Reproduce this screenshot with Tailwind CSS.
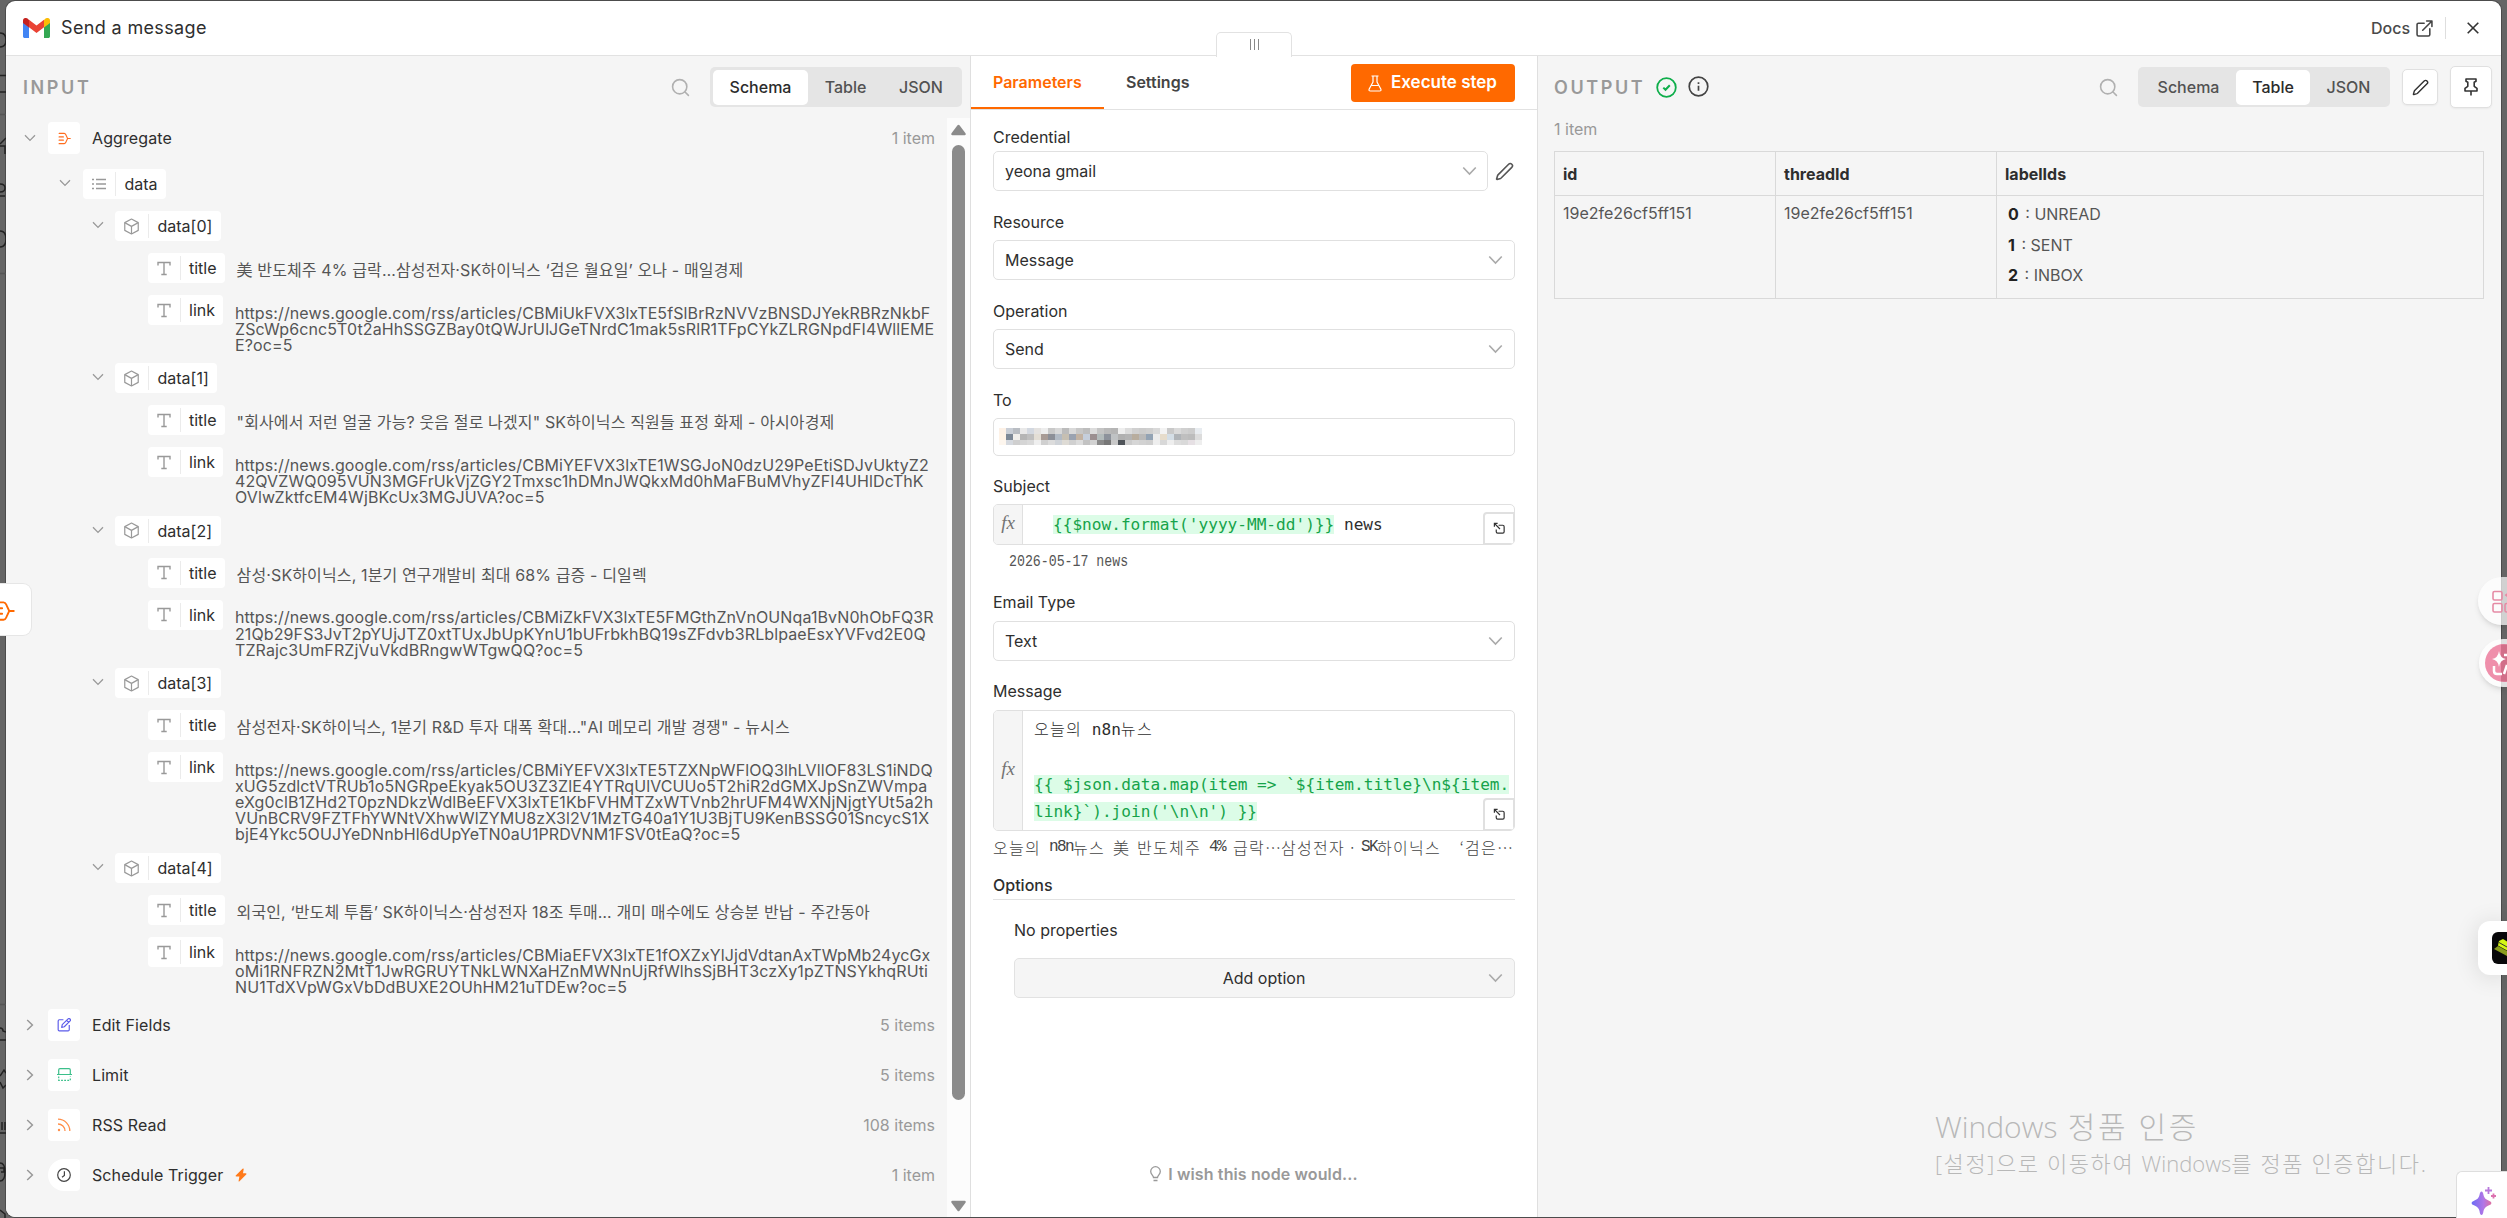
<!DOCTYPE html>
<html lang="ko">
<head>
    <meta charset="utf-8"/>
    <meta content="width=device-width, initial-scale=1.0" name="viewport"/>
    <title>Send a message</title>
    <script src="https://cdn.jsdelivr.net/npm/@tailwindcss/browser@4"></script>
</head>
<body class="bg-[#656565] font-['Inter','Noto_Sans_CJK_KR',sans-serif] text-base text-[#2e2e2e] overflow-hidden">
    <!-- shared icons -->
    <svg class="hidden">
        <symbol id="i-down" viewBox="0 0 12 8"><path d="M1 1.2 6 6.4 11 1.2" fill="none" stroke="currentColor" stroke-width="1.3"/></symbol>
        <symbol id="i-right" viewBox="0 0 8 12"><path d="M1.2 1 6.4 6 1.2 11" fill="none" stroke="currentColor" stroke-width="1.5"/></symbol>
        <symbol id="i-search" viewBox="0 0 24 24"><g fill="none" stroke="currentColor" stroke-width="2" stroke-linecap="round"><circle cx="11" cy="11" r="9"/><path d="m22 22-4.3-4.3"/></g></symbol>
        <symbol id="i-pencil" viewBox="0 0 24 24"><g fill="none" stroke="currentColor" stroke-width="2" stroke-linejoin="round" stroke-linecap="round"><path d="M21.2 6.8a2.8 2.8 0 0 0-4-4L3.8 16.2a2 2 0 0 0-.5.8L2 21.400a.5.5 0 0 0 .6.6L7 20.700a2 2 0 0 0 .8-.5z"/></g></symbol>
        <symbol id="i-cube" viewBox="0 0 24 24"><g fill="none" stroke="currentColor" stroke-width="1.7" stroke-linejoin="round"><path d="M12 1.500 21.500 6.500v11L12 22.500l-9.500-5v-11z"/><path d="M2.500 6.500 12 11.800l9.500-5.300M12 11.800v10.700"/></g></symbol>
        <symbol id="i-text" viewBox="0 0 14 15"><path d="M1 4.500V1.500h12v3M7 1.500v12M4.300 13.500h5.400" fill="none" stroke="currentColor" stroke-width="1.400"/></symbol>
        <symbol id="i-merge" viewBox="0 0 24 24"><g fill="none" stroke="currentColor" stroke-width="2" stroke-linecap="round" stroke-linejoin="round"><path d="M2 2.500h9.500c2 0 2.500 1.500 3.200 3l3 6.500h5M2 21.500h9.500c2 0 2.500-1.500 3.200-3l3-6.500M2 9h8M2 15h8"/></g></symbol>
        <symbol id="i-expand" viewBox="0 0 14 14"><path d="M6 3.500h4.500a1.500 1.500 0 0 1 1.500 1.500v5.500a1.500 1.500 0 0 1-1.500 1.500H5a1.500 1.500 0 0 1-1.500-1.500V8M1.500 5V1.500H5M1.500 1.500l6 6" fill="none" stroke="currentColor" stroke-width="1.300"/></symbol>
    </svg>

    <div class="relative h-[1218px] w-[2507px] pt-px pl-[6px] pb-px pr-[6px]">
        <!-- dimmed canvas seen at the left edge -->
        <svg class="absolute left-0 top-0 w-[6px] h-[1218px]" fill="none" stroke="#222" stroke-width="1.500">
            <path d="M0 3v0M0 33q6 0 6 7t-6 7M0 75.500h6M0 92h6M0 144l6-6M0 146h5v8M0 184q5 0 5 4t-5 4M0 196h5M0 231q6 0 6 8t-6 8M0 1028q3 0 3 3l3 1M0 1040h6M0 1076l4-6 2 3M0 1082l3 6 3-3M2 1122v8M5 1122v8M0 1133h6M0 1163q5 0 5 9t-5 9M0 1168h4v4h-3M0 1210l5 4v4"/>
            <path d="M0 114.500h6M0 273.500h6M0 1004.500h6" stroke="#555"/>
        </svg>

        <div class="flex h-[1216px] w-[2495px] flex-col overflow-hidden rounded-[9px] bg-white ring-1 ring-[#4c4c4c]">
            <header class="flex h-[55px] shrink-0 items-center border-b border-[#e2e2e2] pl-[17px] pr-[22px]">
                <svg class="h-[20px] w-[27px]" viewBox="0 0 27 20">
                    <path d="M0 4v14.200C0 19.200.8 20 1.800 20H6V9z" fill="#4285f4"/>
                    <path d="M21 20h4.200c1 0 1.800-.8 1.800-1.800V4l-6 5z" fill="#34a853"/>
                    <path d="M21 2v7.500l6-4.600V2.500C27 .2 24.300-.8 22.500.6z" fill="#fbbc04"/>
                    <path d="M6 9.300V1.700l7.500 5.700L21 1.700v7.600L13.500 15z" fill="#ea4335"/>
                    <path d="M0 2.500v2.400l6 4.600V2L4.500.6C2.700-.8 0 .2 0 2.500z" fill="#c5221f"/>
                </svg>
                <span class="ml-[11px] text-[18px] leading-6 tracking-[.35px]">Send a message</span>
                <div class="ml-auto flex items-center">
                    <span class="text-base font-medium text-[#4a4a4a]">Docs</span>
                    <svg class="ml-[6px] size-[17px] text-[#444]" viewBox="0 0 24 24" fill="none" stroke="currentColor" stroke-width="2.200" stroke-linecap="round" stroke-linejoin="round"><path d="M15 1.500h7.500V9M9.500 14.500l13-13M19.500 12.500v8a2 2 0 0 1-2 2h-14a2 2 0 0 1-2-2v-14a2 2 0 0 1 2-2h8"/></svg>
                    <span class="ml-[12px] h-[22px] w-px bg-[#dedede]"></span>
                    <svg class="ml-[21px] size-[12px]" viewBox="0 0 12 12" fill="none" stroke="#333" stroke-width="1.600"><path d="m.7.7 10.600 10.600M11.300.7.7 11.300"/></svg>
                </div>
            </header>

            <main class="flex min-h-0 grow">
                <!-- input -->
                <section class="flex w-[965px] shrink-0 flex-col border-r border-[#dfdfdf] bg-[#f5f5f5]">
                    <div class="flex h-[62px] shrink-0 items-center pl-[17px] pr-[8px]">
                        <span class="text-[18px] font-semibold tracking-[2.600px] text-[#999]">INPUT</span>
                        <svg class="ml-auto size-[19px] text-[#b0b0b0]"><use href="#i-search"/></svg>
                        <div class="ml-[20px] flex h-[40px] w-[252px] items-center rounded-[5px] bg-[#e5e5e5] p-[3px] font-medium text-[#525252]">
                            <span class="flex h-[35px] w-[95px] items-center justify-center rounded-[5px] bg-white text-[#2b2b2b]">Schema</span>
                            <span class="w-[75px] text-center">Table</span>
                            <span class="w-[76px] text-center">JSON</span>
                        </div>
                    </div>
                    <div class="flex min-h-0 grow">
                        <div class="w-[941px] pt-[4px] pr-[12px]">
                            <div class="flex h-[32px] items-center pl-[17px]">
                                <svg class="mx-[1px] h-[8px] w-[12px] text-[#999]"><use href="#i-down"/></svg>
                                <span class="ml-[11px] flex size-[32px] items-center justify-center rounded-[4px] bg-white text-[#ff6d1f]"><svg class="size-[13px]"><use href="#i-merge"/></svg></span>
                                <span class="ml-[12px] tracking-[.1px]">Aggregate</span>
                                <span class="ml-auto text-[#999]">1 item</span>
                            </div>
                            <div class="mt-[15px] flex h-[42px] items-start pl-[53px]">
                                <svg class="mt-[10px] h-[8px] w-[12px] text-[#999]"><use href="#i-down"/></svg>
                                <span class="ml-[12px] flex h-[30px] items-center rounded-[4px] bg-white">
                                    <svg class="mx-[9px] h-[12px] w-[14px]" viewBox="0 0 14 12" fill="none" stroke="#999" stroke-width="1.400"><path d="M0 1.500h2M0 6h2M0 10.500h2M4 1.500h10M4 6h10M4 10.500h10"/></svg>
                                    <span class="h-[24px] w-px bg-[#ebebeb]"></span>
                                    <span class="px-[8.500px]">data</span>
                                </span>
                            </div>
                            <div id="tree"></div>
                            <div id="sources" class="mt-[3px]"></div>
                        </div>
                        <div class="flex w-[23px] flex-col items-center bg-[#fcfcfc]">
                            <svg class="mt-[6px] h-[12px] w-[15px]" viewBox="0 0 15 12" fill="#8b8b8b"><path d="M6.500 1.200q1-1 2 0l6 8q.8 2-1 2h-12q-1.800 0-1-2z"/></svg>
                            <div class="mt-[9px] h-[955px] w-[13px] rounded-full bg-[#8b8b8b]"></div>
                            <svg class="mt-[100px] h-[12px] w-[15px]" viewBox="0 0 15 12" fill="#8b8b8b"><path d="M6.500 10.800q1 1 2 0l6-8q.8-2-1-2h-12q-1.800 0-1 2z"/></svg>
                        </div>
                    </div>
                </section>

                <!-- parameters -->
                <section class="relative w-[566px] shrink-0 bg-white">
                    <div class="absolute -top-[24px] left-[245px] flex h-[25px] w-[76px] items-center justify-center gap-[3px] rounded-t-[5px] border border-b-0 border-[#e2e2e2] bg-white pb-[2px]">
                        <i class="h-[11px] w-px bg-[#888]"></i><i class="h-[11px] w-px bg-[#888]"></i><i class="h-[11px] w-px bg-[#888]"></i>
                    </div>
                    <div class="flex h-[54px] items-start border-b border-[#e2e2e2] pr-[22px] font-semibold">
                        <span class="h-[53px] w-[133px] border-b-2 border-[#ff6900] pt-[14px] pl-[22px] leading-6 text-[#ff6900]">Parameters</span>
                        <span class="ml-[22px] pt-[14px] leading-6 text-[#444]">Settings</span>
                        <button class="mt-[8px] ml-auto flex h-[38px] w-[164px] items-center rounded-[4px] bg-[#ff6900] pl-[17px] text-[17px] text-white">
                            <svg class="mr-[9px] h-[17px] w-[14px]" viewBox="0 0 14 17" fill="none" stroke="#fff" stroke-width="1.200" stroke-linejoin="round"><path d="M3.500 1h7M5 1v6L1.200 14q-.8 2 1.300 2h9q2.100 0 1.300-2L9 7V1M3.500 10.500h7"/></svg>
                            Execute step
                        </button>
                    </div>
                    <div class="flex flex-col pr-[22px] pl-[22px] leading-6">
                        <label class="mt-[15px]">Credential</label>
                        <div class="mt-[2px] flex items-center">
                            <div class="flex h-[40px] w-[495px] items-center justify-between rounded-[5px] border border-[#e0e0e0] pl-[11px] pr-[10px]">yeona gmail<svg class="h-[10px] w-[15px] text-[#aaa]"><use href="#i-down"/></svg></div>
                            <svg class="ml-[7px] size-[19px] text-[#555]"><use href="#i-pencil"/></svg>
                        </div>
                        <label class="mt-[19px]">Resource</label>
                        <div class="mt-[6px] flex h-[40px] items-center justify-between rounded-[5px] border border-[#e0e0e0] pl-[11px] pr-[11px]">Message<svg class="h-[10px] w-[15px] text-[#aaa]"><use href="#i-down"/></svg></div>
                        <label class="mt-[19px]">Operation</label>
                        <div class="mt-[6px] flex h-[40px] items-center justify-between rounded-[5px] border border-[#e0e0e0] pl-[11px] pr-[11px]">Send<svg class="h-[10px] w-[15px] text-[#aaa]"><use href="#i-down"/></svg></div>
                        <label class="mt-[19px]">To</label>
                        <div class="mt-[6px] flex h-[38px] items-center rounded-[5px] border border-[#e0e0e0] pl-[5px]">
                            <svg id="mask" class="h-[18px] w-[205px]" shape-rendering="crispEdges"></svg>
                        </div>
                        <label class="mt-[18px]">Subject</label>
                        <div class="relative mt-[6px] flex h-[41px] overflow-hidden rounded-[5px] border border-[#e0e0e0]">
                            <span class="flex w-[29px] items-center justify-center border-r border-[#e0e0e0] bg-[#f5f5f5] pb-[3px] font-['Liberation_Serif',serif] text-[19px] italic text-[#737373]">fx</span>
                            <p class="pt-[9px] pl-[30px] font-['DejaVu_Sans_Mono',monospace] text-[16.130px] leading-[22px] whitespace-pre"><span class="bg-[#dcfce7] text-[#16a34a]">{{$now.format('yyyy-MM-dd')}}</span> news</p>
                            <span class="absolute -right-px -bottom-px flex h-[33px] w-[32px] items-center justify-center rounded-tl-[4px] border-2 border-[#e0e0e0] bg-white"><svg class="size-[13px] text-[#333]"><use href="#i-expand"/></svg></span>
                        </div>
                        <p class="mt-[5px] ml-[16px] h-[23px] origin-left scale-x-[.827] font-['Liberation_Mono',monospace] text-base text-[#555] whitespace-pre">2026-05-17 news</p>
                        <label class="mt-[17px]">Email Type</label>
                        <div class="mt-[7px] flex h-[40px] items-center justify-between rounded-[5px] border border-[#e0e0e0] pl-[11px] pr-[11px]">Text<svg class="h-[10px] w-[15px] text-[#aaa]"><use href="#i-down"/></svg></div>
                        <label class="mt-[18px]">Message</label>
                        <div class="relative mt-[7px] flex h-[121px] overflow-hidden rounded-[5px] border border-[#e0e0e0]">
                            <span class="flex w-[29px] items-center justify-center border-r border-[#e0e0e0] bg-[#f5f5f5] pb-[3px] font-['Liberation_Serif',serif] text-[19px] italic text-[#737373]">fx</span>
                            <div class="pt-[5px] pl-[11px] font-['DejaVu_Sans_Mono','Noto_Sans_CJK_KR',monospace] text-[16.130px] leading-[27px] whitespace-nowrap">
                                <p class="h-[27px]"><span class="font-light tracking-[1.200px]">오늘의</span> n8n<span class="font-light tracking-[1.200px]">뉴스</span></p>
                                <p class="mt-[28px] h-[27px]"><span class="bg-[#dcfce7] text-[#16a34a]">{{ $json.data.map(item =&gt; `${item.title}\n${item.</span></p>
                                <p class="h-[27px]"><span class="bg-[#dcfce7] text-[#16a34a]">link}`).join('\n\n') }}</span></p>
                            </div>
                            <span class="absolute -right-px -bottom-px flex h-[33px] w-[32px] items-center justify-center rounded-tl-[4px] border-2 border-[#e0e0e0] bg-white"><svg class="size-[13px] text-[#333]"><use href="#i-expand"/></svg></span>
                        </div>
                        <p class="mt-[4px] flex h-[24px] font-['Noto_Sans_CJK_KR',sans-serif] text-base leading-6 font-light tracking-[1.280px] text-[#444] whitespace-pre"><span class="w-[56px]">오늘의</span><span class="w-[24px] font-['Liberation_Mono',monospace] tracking-[-1.600px]">n8n</span><span class="w-[40px]">뉴스</span><span class="w-[24px]">美</span><span class="w-[72px]">반도체주</span><span class="w-[24px] font-['Liberation_Mono',monospace] tracking-[-1.600px]">4%</span><span class="w-[32px]">급락</span><span class="w-[16px]">…</span><span class="w-[64px]">삼성전자</span><span class="w-[16px] text-center">·</span><span class="w-[16px] font-['Liberation_Mono',monospace] tracking-[-1.600px]">SK</span><span class="w-[72px]">하이닉스</span><span class="w-[16px] text-right">‘</span><span class="w-[32px]">검은</span><span class="w-[16px]">…</span></p>
                        <div class="mt-[14px] border-b border-[#e2e2e2] pb-[2px] font-medium">Options</div>
                        <p class="mt-[18px] ml-[21px]">No properties</p>
                        <div class="mt-[16px] ml-[21px] flex h-[40px] items-center rounded-[5px] border border-[#e2e2e2] bg-[#f5f5f5] pr-[11px]"><span class="grow pl-[25px] text-center">Add option</span><svg class="h-[10px] w-[15px] text-[#aaa]"><use href="#i-down"/></svg></div>
                        <div class="mt-[164px] flex items-center justify-center gap-[7px] font-semibold tracking-[.12px] text-[#999]">
                            <svg class="h-[16px] w-[11px]" viewBox="0 0 11 16" fill="none" stroke="currentColor" stroke-width="1.300"><path d="M3.500 11.500c0-2-2.800-3-2.800-6a4.800 4.800 0 0 1 9.600 0c0 3-2.800 4-2.800 6zM3.500 14.500h4"/></svg>
                            I wish this node would...
                        </div>
                    </div>
                </section>

                <!-- output -->
                <section class="grow border-l border-[#dfdfdf] bg-[#f5f5f5]">
                    <div class="flex h-[62px] items-center pl-[16px] pr-[9px]">
                        <span class="text-[18px] font-semibold tracking-[2.600px] text-[#999]">OUTPUT</span>
                        <svg class="ml-[11px] size-[21px]" viewBox="0 0 21 21" fill="none" stroke="#0fae4b" stroke-width="1.800"><circle cx="10.500" cy="10.500" r="9.300"/><path d="m7.300 10.600 2.200 2.200 4.300-4.600" stroke-width="2"/></svg>
                        <svg class="mb-[2px] ml-[11px] size-[21px]" viewBox="0 0 21 21" fill="none" stroke="#444" stroke-width="1.700"><circle cx="10.500" cy="10.500" r="9.300"/><path d="M10.500 9.800v5M10.500 6.200v1.700"/></svg>
                        <svg class="ml-auto size-[19px] text-[#b0b0b0]"><use href="#i-search"/></svg>
                        <div class="ml-[20px] flex h-[40px] w-[252px] items-center rounded-[5px] bg-[#e5e5e5] p-[3px] font-medium text-[#525252]">
                            <span class="w-[95px] text-center">Schema</span>
                            <span class="flex h-[35px] w-[74px] items-center justify-center rounded-[5px] bg-white text-[#2b2b2b]">Table</span>
                            <span class="w-[77px] text-center">JSON</span>
                        </div>
                        <span class="ml-[12px] flex size-[36px] items-center justify-center rounded-[5px] border border-[#e0e0e0] bg-white shadow-xs"><svg class="size-[17px] text-[#333]"><use href="#i-pencil"/></svg></span>
                        <span class="ml-[12px] flex size-[42px] items-center justify-center rounded-[5px] border border-[#e0e0e0] bg-white shadow-xs"><svg class="h-[18px] w-[14px]" viewBox="0 0 14 18" fill="none" stroke="#333" stroke-width="1.600" stroke-linejoin="round"><path d="M2 1h10v2.300l-1.800 1v4l2.800 2V13H1v-2.700l2.800-2v-4L2 3.300zM7 13v4.500"/></svg></span>
                    </div>
                    <p class="mt-[-1px] ml-[16px] leading-6 text-[#999]">1 item</p>
                    <table class="mt-[10px] ml-[16px] w-[930px] table-fixed border-collapse text-left leading-6">
                        <tr class="h-[44px]">
                            <th class="w-[221px] border border-[#d9d9d9] px-[8px] font-bold">id</th>
                            <th class="w-[221px] border border-[#d9d9d9] px-[8px] font-bold">threadId</th>
                            <th class="border border-[#d9d9d9] px-[8px] font-bold">labelIds</th>
                        </tr>
                        <tr class="h-[103px] align-top text-[#555]">
                            <td class="border border-[#d9d9d9] px-[8px] pt-[5px]">19e2fe26cf5ff151</td>
                            <td class="border border-[#d9d9d9] px-[8px] pt-[5px]">19e2fe26cf5ff151</td>
                            <td class="border border-[#d9d9d9] px-[11px] pt-[3px] leading-[30.500px]">
                                <p><b class="mr-[2px] text-[#222]">0</b> : UNREAD</p>
                                <p><b class="mr-[2px] text-[#222]">1</b> : SENT</p>
                                <p><b class="mr-[2px] text-[#222]">2</b> : INBOX</p>
                            </td>
                        </tr>
                    </table>
                </section>
            </main>
        </div>

        <!-- previous node handle -->
        <div class="absolute top-[583px] left-0 h-[53px] w-[32px] overflow-hidden rounded-r-[9px] border border-l-0 border-[#e6e6e6] bg-white">
            <svg class="mt-[16px] -ml-[7px] size-[22px] text-[#ff6900]"><use href="#i-merge"/></svg>
        </div>

        <!-- windows activation watermark -->
        <div class="absolute top-[1104px] left-[1935px] font-['Open_Sans','Noto_Sans_CJK_KR',sans-serif] font-light text-[#b8b8b8] whitespace-nowrap">
            <p class="text-[30px] leading-[46px]">Windows<span class="tracking-[2.600px]"> 정품 인증</span></p>
            <p class="text-[22px] leading-[27px] tracking-[1.600px]">[설정]으로 이동하여 <span class="tracking-normal">Windows</span>를 정품 인증합니다.</p>
        </div>

        <!-- browser extension bubbles -->
        <div class="absolute top-[577px] right-0 h-[48px] w-[29px] overflow-hidden rounded-l-full bg-white/70 shadow-md">
            <svg class="mt-[13px] ml-[14px] size-[24px]" viewBox="0 0 24 24" fill="none" stroke="#e58ba5" stroke-width="1.600"><rect x="1" y="1.500" width="9" height="8.500" rx="1.500"/><rect x="1" y="13.500" width="9" height="8.500" rx="1.500"/><rect x="13" y="13.500" width="9" height="8.500" rx="1.500"/><path d="m12.500 5 4-3v6z" fill="#e58ba5" stroke="none"/></svg>
        </div>
        <div class="absolute top-[639px] right-0 h-[48px] w-[28px] overflow-hidden rounded-l-full bg-white/80 shadow-md">
            <svg class="mt-[5px] ml-[6px] h-[38px] w-[22px]" viewBox="0 0 22 38"><circle cx="19" cy="19" r="19" fill="#ef8fab"/><path d="M16 0.500h6v37h-6z" fill="#b8566e" opacity=".55"/><path d="M14 7q1 7 7 8-6 1-7 8-1-7-7-8 6-1 7-8z" fill="#fff"/><path d="M9 22v5q0 3 3 3h5M22 11h-3M19 30l3-9" fill="none" stroke="#fff" stroke-width="2.500"/></svg>
        </div>
        <div class="absolute top-[921px] right-0 h-[54px] w-[29px] overflow-hidden rounded-l-[12px] bg-white shadow-[0_2px_24px_rgba(0,0,0,.12)]">
            <svg class="mt-[11px] ml-[14px] h-[32px] w-[15px]" viewBox="0 0 15 32"><rect width="30" height="32" rx="6" fill="#08080a"/><path d="m7 9 4-2 4 2.500v9L6 13.500z" fill="#d4f514"/><path d="m2 17 4-3 9 5v5z" fill="#8a9c1e"/><path d="m7 10.500 8 4.500" stroke="#333" fill="none"/></svg>
        </div>
        <div class="absolute right-0 bottom-0 h-[47px] w-[51px] rounded-tl-[6px] border border-r-0 border-b-0 border-[#dedede] bg-white">
            <svg class="mt-[15px] ml-[14px] h-[29px] w-[26px]" viewBox="0 0 26 29">
                <defs><linearGradient id="ai" x1="0" x2="1"><stop stop-color="#6b6bf5"/><stop offset=".6" stop-color="#b176e6"/><stop offset="1" stop-color="#e0709f"/></linearGradient></defs>
                <path d="M10.500 4.500q1.500 0 2 3.500.8 4 5 5.500 3 1 3 2.500t-3 2.500q-4.200 1.500-5 5.500-.5 4-2 4t-2-4q-.8-4-5-5.500-3-1-3-2.500t3-2.500q4.200-1.500 5-5.500.5-3.500 2-3.500z" fill="url(#ai)"/>
                <path d="M17.500 0v7M14 3.500h7" stroke="#b878dc" stroke-width="1.800"/><path d="M22.500 6.500v5M20 9h5" stroke="#dd72b0" stroke-width="1.800"/>
            </svg>
        </div>
    </div>

    <script>
const articles = [
    {
        title: '美 반도체주 4% 급락…삼성전자·SK하이닉스 ‘검은 월요일’ 오나 - 매일경제',
        link: ['https://news.google.com/rss/articles/CBMiUkFVX3lxTE5fSlBrRzNVVzBNSDJYekRBRzNkbF', 'ZScWp6cnc5T0t2aHhSSGZBay0tQWJrUlJGeTNrdC1mak5sRlR1TFpCYkZLRGNpdFI4WllEME', 'E?oc=5']
    },
    {
        title: '"회사에서 저런 얼굴 가능? 웃음 절로 나겠지" SK하이닉스 직원들 표정 화제 - 아시아경제',
        link: ['https://news.google.com/rss/articles/CBMiYEFVX3lxTE1WSGJoN0dzU29PeEtiSDJvUktyZ2', '42QVZWQ095VUN3MGFrUkVjZGY2Tmxsc1hDMnJWQkxMd0hMaFBuMVhyZFI4UHlDcThK', 'OVlwZktfcEM4WjBKcUx3MGJUVA?oc=5']
    },
    {
        title: '삼성·SK하이닉스, 1분기 연구개발비 최대 68% 급증 - 디일렉',
        link: ['https://news.google.com/rss/articles/CBMiZkFVX3lxTE5FMGthZnVnOUNqa1BvN0hObFQ3R', '21Qb29FS3JvT2pYUjJTZ0xtTUxJbUpKYnU1bUFrbkhBQ19sZFdvb3RLblpaeEsxYVFvd2E0Q', 'TZRajc3UmFRZjVuVkdBRngwWTgwQQ?oc=5']
    },
    {
        title: '삼성전자·SK하이닉스, 1분기 R&amp;D 투자 대폭 확대…"AI 메모리 개발 경쟁" - 뉴시스',
        link: ['https://news.google.com/rss/articles/CBMiYEFVX3lxTE5TZXNpWFlOQ3lhLVllOF83LS1iNDQ', 'xUG5zdlctVTRUb1o5NGRpeEkyak5OU3Z3ZlE4YTRqUlVCUUo5T2hiR2dGMXJpSnZWVmpa', 'eXg0clB1ZHd2T0pzNDkzWdlBeEFVX3lxTE1KbFVHMTZxWTVnb2hrUFM4WXNjNjgtYUt5a2h', 'VUnBCRV9FZTFhYWNtVXhwWlZYMU8zX3l2V1MzTG40a1Y1U3BjTU9KenBSSG01SncycS1X', 'bjE4Ykc5OUJYeDNnbHl6dUpYeTN0aU1PRDVNM1FSV0tEaQ?oc=5']
    },
    {
        title: '외국인, ‘반도체 투톱’ SK하이닉스·삼성전자 18조 투매… 개미 매수에도 상승분 반납 - 주간동아',
        link: ['https://news.google.com/rss/articles/CBMiaEFVX3lxTE1fOXZxYlJjdVdtanAxTWpMb24ycGx', 'oMi1RNFRZN2MtT1JwRGRUYTNkLWNXaHZnMWNnUjRfWlhsSjBHT3czXy1pZTNSYkhqRUti', 'NU1TdXVpWGxVbDdBUXE2OUhHM21uTDEw?oc=5']
    }
];

const textIcon = '<svg class="mx-[9px] h-[15px] w-[14px] text-[#999]"><use href="#i-text"/></svg><span class="h-[24px] w-px bg-[#ebebeb]"></span>';

document.getElementById('tree').innerHTML = articles.map((a, i) => `
    <div class="flex h-[42px] items-start pl-[86px]">
        <svg class="mt-[10px] h-[8px] w-[12px] text-[#999]"><use href="#i-down"/></svg>
        <span class="ml-[11px] flex h-[30px] items-center rounded-[4px] bg-white">
            <svg class="mx-[8px] size-[17px] text-[#999]"><use href="#i-cube"/></svg><span class="h-[24px] w-px bg-[#ebebeb]"></span>
            <span class="px-[8.500px]">data[${i}]</span>
        </span>
    </div>
    <div class="flex h-[42px] items-start pl-[142px]">
        <span class="flex h-[30px] items-center rounded-[4px] bg-white">${textIcon}<span class="px-[8px]">title</span></span>
        <span class="ml-[12px] leading-[34px] tracking-[.13px] whitespace-nowrap text-[#555]">${a.title}</span>
    </div>
    <div class="flex items-start pb-[10.700px] pl-[142px]">
        <span class="flex h-[30px] w-[75px] items-center rounded-[4px] bg-white">${textIcon}<span class="px-[8px]">link</span></span>
        <span class="ml-[12px] pt-[9.500px] leading-[16.100px] tracking-[.105px] whitespace-nowrap text-[#555]">${a.link.join('<br>')}</span>
    </div>`).join('');

const sources = [
    { name: 'Edit Fields', count: '5 items', box: 'rounded-[4px]', icon: '<svg class="size-[14px]" viewBox="0 0 24 24" fill="none" stroke="#5b5bea" stroke-width="2" stroke-linejoin="round"><path d="M11 3H4a2 2 0 0 0-2 2v15a2 2 0 0 0 2 2h15a2 2 0 0 0 2-2v-8"/><path d="M19 1.500a2.500 2.500 0 0 1 3.500 3.500L12.500 15 8 16l1-4.500zM16.500 4l3.500 3.500"/></svg>' },
    { name: 'Limit', count: '5 items', box: 'rounded-[4px]', icon: '<svg class="h-[13px] w-[15px]" viewBox="0 0 15 13" fill="none" stroke="#3bbf8a" stroke-width="1.200"><path d="M0 6.500h15M1.700 6V2q0-1.300 1.300-1.300h9q1.300 0 1.300 1.300v4"/><path d="M1.700 8.500v3.800h11.600V8.500" stroke-dasharray="1.800 1.300"/></svg>' },
    { name: 'RSS Read', count: '108 items', box: 'rounded-[4px]', icon: '<svg class="size-[14px]" viewBox="0 0 14 14" fill="none" stroke="#ff8f4a" stroke-width="1.300"><path d="M1 6a7 7 0 0 1 7 7M1 1.200A11.800 11.800 0 0 1 12.800 13"/><circle cx="2" cy="12" r="1.200" fill="#ff8f4a" stroke="none"/></svg>' },
    { name: 'Schedule Trigger', count: '1 item', box: 'rounded-r-[4px] rounded-l-[16px]', bolt: true, icon: '<svg class="size-[14px]" viewBox="0 0 14 14" fill="none" stroke="#444" stroke-width="1.200"><circle cx="7" cy="7" r="6.300"/><path d="M7.400 3.200v4.200L5 9.300"/></svg>' }
];

document.getElementById('sources').innerHTML = sources.map(s => `
    <div class="mb-[18px] flex h-[32px] items-center pl-[20px]">
        <svg class="h-[12px] w-[8px] text-[#999]"><use href="#i-right"/></svg>
        <span class="ml-[14px] flex size-[32px] items-center justify-center bg-white ${s.box}">${s.icon}</span>
        <span class="ml-[12px] tracking-[.1px]">${s.name}</span>
        ${s.bolt ? '<svg class="ml-[12px] h-[14px] w-[12px]" viewBox="0 0 12 14" fill="#ff7a1a"><path d="M7.500.8 1 7.200q-1.200 1.300.6 1.300h2.800L3.600 13q0 1 .9.300L11.200 6.500q1-1.200-.6-1.200H8L8.700 1q0-1-1.200-.2z"/></svg>' : ''}
        <span class="ml-auto text-[#999]">${s.count}</span>
    </div>`).join('');

// masked recipient address
const shades = [
    ['#fdf1e6', '#c9ced6', '#b9bdc3', '#e9e9e9', '#d3d8e0', '#e4e2e0', '#ededed', '#c9c9c9', '#d8d8d8', '#bcbcbc', '#d9d9d9', '#c7c7c7', '#bdbdbd', '#dcdcdc', '#c4c4c4', '#b9b9b9', '#b5b5b5', '#eeeeee', '#dcdcdc', '#d0d0d0', '#cccccc', '#cfcfcf', '#d9d9d9', '#f3f3f3', '#c9c9c9', '#dadada', '#d0d0d0', '#cccccc', '#e8ecf0'],
    ['#fff3e6', '#7d8896', '#f1efec', '#b5b5b5', '#bfbfbf', '#e3ded5', '#a89b95', '#8c8f97', '#b2bac4', '#c6bfb2', '#9aa2b0', '#c2b2a2', '#c5cedb', '#9b8f90', '#b3bbbb', '#8d929b', '#bfc2c4', '#b0b0b0', '#b4b4b4', '#b8ad9e', '#b9b9b9', '#93a3b4', '#ececec', '#e6dccb', '#d4dee6', '#b0b4b8', '#bfbfbf', '#bcbcbc', '#dcdcdc'],
    ['#fdf6ee', '#d5d9df', '#cfcfcf', '#d5d5d5', '#dadada', '#efefef', '#d0d0d0', '#dcdcdc', '#cfd3d8', '#dedbd5', '#d0d0d0', '#dcdcdc', '#c2c2c2', '#d2d2d2', '#8a8a8a', '#777777', '#c8c8c8', '#4f5459', '#cccccc', '#d6d6d6', '#d2d2d2', '#cfcfcf', '#eeeeee', '#d8d8d8', '#eeeeee', '#dddddd', '#d9d9d9', '#e6e0e4', '#eeeeee']
];
const rowY = [0, 6, 12];
const rowH = [6, 6, 5];
document.getElementById('mask').innerHTML = shades.map((row, r) => row.map((c, i) =>
    `<rect x="${i * 7}" y="${rowY[r]}" width="7" height="${rowH[r]}" fill="${c}"/>`).join('')).join('');
    </script>
</body>
</html>
